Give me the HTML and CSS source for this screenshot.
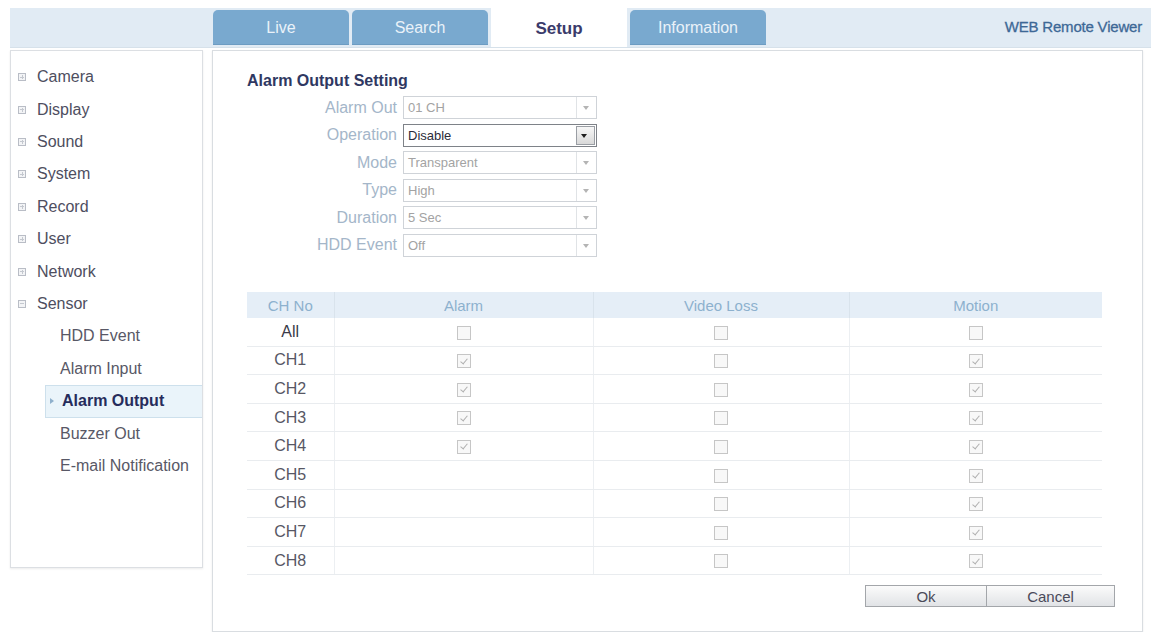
FILE: index.html
```html
<!DOCTYPE html>
<html lang="en">
<head>
    <meta charset="UTF-8">
    <title>WEB Remote Viewer - Setup</title>
    <link rel="stylesheet" href="styles.css">
</head>
<body>
<div class="page">
    <div class="topbar">
        <nav class="tabs">
            <a class="tab">Live</a>
            <a class="tab">Search</a>
            <a class="tab active">Setup</a>
            <a class="tab">Information</a>
        </nav>
        <span class="brand">WEB Remote Viewer</span>
    </div>

    <div class="main">
        <ul class="menu">
            <li class="menu-item"><i class="menu-icon"></i>Camera</li>
            <li class="menu-item"><i class="menu-icon"></i>Display</li>
            <li class="menu-item"><i class="menu-icon"></i>Sound</li>
            <li class="menu-item"><i class="menu-icon"></i>System</li>
            <li class="menu-item"><i class="menu-icon"></i>Record</li>
            <li class="menu-item"><i class="menu-icon"></i>User</li>
            <li class="menu-item"><i class="menu-icon"></i>Network</li>
            <li class="menu-item open"><i class="menu-icon"></i>Sensor</li>
            <li class="sub-item">HDD Event</li>
            <li class="sub-item">Alarm Input</li>
            <li class="sub-item current">Alarm Output</li>
            <li class="sub-item">Buzzer Out</li>
            <li class="sub-item">E-mail Notification</li>
        </ul>

        <section class="panel">
            <h2 class="panel-title">Alarm Output Setting</h2>

            <div class="form">
                <div class="form-row">
                    <label class="form-label">Alarm Out</label>
                    <div class="select"><span class="select-value">01 CH</span><b class="select-arrow"></b></div>
                </div>
                <div class="form-row">
                    <label class="form-label">Operation</label>
                    <div class="select enabled"><span class="select-value">Disable</span><b class="select-arrow"></b></div>
                </div>
                <div class="form-row">
                    <label class="form-label">Mode</label>
                    <div class="select"><span class="select-value">Transparent</span><b class="select-arrow"></b></div>
                </div>
                <div class="form-row">
                    <label class="form-label">Type</label>
                    <div class="select"><span class="select-value">High</span><b class="select-arrow"></b></div>
                </div>
                <div class="form-row">
                    <label class="form-label">Duration</label>
                    <div class="select"><span class="select-value">5 Sec</span><b class="select-arrow"></b></div>
                </div>
                <div class="form-row">
                    <label class="form-label">HDD Event</label>
                    <div class="select"><span class="select-value">Off</span><b class="select-arrow"></b></div>
                </div>
            </div>

            <table class="channels">
                <colgroup>
                    <col class="col-ch">
                    <col class="col-alarm">
                    <col class="col-loss">
                    <col>
                </colgroup>
                <thead>
                    <tr><th>CH No</th><th>Alarm</th><th>Video Loss</th><th>Motion</th></tr>
                </thead>
                <tbody>
                    <tr><td class="ch all">All</td><td><span class="cb"></span></td><td><span class="cb"></span></td><td><span class="cb"></span></td></tr>
                    <tr><td class="ch">CH1</td><td><span class="cb on"></span></td><td><span class="cb"></span></td><td><span class="cb on"></span></td></tr>
                    <tr><td class="ch">CH2</td><td><span class="cb on"></span></td><td><span class="cb"></span></td><td><span class="cb on"></span></td></tr>
                    <tr><td class="ch">CH3</td><td><span class="cb on"></span></td><td><span class="cb"></span></td><td><span class="cb on"></span></td></tr>
                    <tr><td class="ch">CH4</td><td><span class="cb on"></span></td><td><span class="cb"></span></td><td><span class="cb on"></span></td></tr>
                    <tr><td class="ch">CH5</td><td></td><td><span class="cb"></span></td><td><span class="cb on"></span></td></tr>
                    <tr><td class="ch">CH6</td><td></td><td><span class="cb"></span></td><td><span class="cb on"></span></td></tr>
                    <tr><td class="ch">CH7</td><td></td><td><span class="cb"></span></td><td><span class="cb on"></span></td></tr>
                    <tr><td class="ch">CH8</td><td></td><td><span class="cb"></span></td><td><span class="cb on"></span></td></tr>
                </tbody>
            </table>

            <div class="actions">
                <button class="btn btn-ok">Ok</button>
                <button class="btn btn-cancel">Cancel</button>
            </div>
        </section>
    </div>
</div>
</body>
</html>
```

FILE: styles.css
```css
body {
    margin: 0;
    background: #fff;
    font-family: "Liberation Sans", Arial, sans-serif;
    color: #4e4e60;
}
.page {
    padding: 8px 0 0 10px;
}

/* top bar */
.topbar {
    display: flex;
    align-items: flex-start;
    height: 40px;
    background: #e1ebf4;
    border-bottom: 1px solid #d6e1ea;
    box-sizing: border-box;
}
.tabs {
    display: flex;
    gap: 3px;
    margin-left: 203px;
}
.tab {
    width: 136px;
    height: 35px;
    margin-top: 2px;
    line-height: 35px;
    text-align: center;
    font-size: 16px;
    color: #eaf2f9;
    background: #79a9cf;
    border-radius: 5px 5px 0 0;
    box-shadow: inset 0 -1px 0 #6d9cc2;
}
.tab.active {
    height: 39px;
    margin-top: 0;
    line-height: 41px;
    background: #fff;
    color: #3b3b6b;
    font-weight: bold;
    font-size: 17px;
    box-shadow: none;
    border-radius: 0;
}
.brand {
    margin-left: auto;
    padding-right: 9px;
    line-height: 38px;
    font-size: 15px;
    color: #3d6896;
    letter-spacing: -0.2px;
    -webkit-text-stroke: 0.3px #3d6896;
}

/* layout */
.main {
    display: flex;
    align-items: flex-start;
    gap: 9px;
    margin-top: 2px;
}

/* left menu */
.menu {
    list-style: none;
    margin: 0;
    padding: 10px 0 0;
    width: 193px;
    height: 518px;
    box-sizing: border-box;
    border: 1px solid #dcdfe3;
    box-shadow: 0 1px 2px rgba(0, 0, 0, 0.08);
    flex-shrink: 0;
}
.menu-item,
.sub-item {
    display: flex;
    align-items: center;
    height: 32.4px;
    font-size: 16px;
}
.menu-item {
    padding-left: 7px;
}
.menu-icon {
    position: relative;
    width: 6px;
    height: 6px;
    border: 1px solid #b9bdc6;
    background: #f3f4f6;
    margin-right: 11px;
}
.menu-icon::before {
    content: "";
    position: absolute;
    left: 1px;
    right: 1px;
    top: 2.5px;
    height: 1px;
    background: #c4c8cf;
}
.menu-item:not(.open) .menu-icon::after {
    content: "";
    position: absolute;
    top: 1px;
    bottom: 1px;
    left: 2.5px;
    width: 1px;
    background: #c4c8cf;
}
.sub-item {
    padding-left: 49px;
    color: #585866;
}
.sub-item.current {
    height: 33px;
    margin-left: 34px;
    padding-left: 4px;
    box-sizing: border-box;
    background: #eaf4fa;
    border: 1px solid #cde0ec;
    border-right: 0;
    font-weight: bold;
    color: #262c5c;
}
.sub-item.current::before {
    content: "";
    border-left: 4px solid #8fb0cc;
    border-top: 3.5px solid transparent;
    border-bottom: 3.5px solid transparent;
    margin-right: 8px;
}

/* content panel */
.panel {
    flex: 1;
    height: 582px;
    margin-right: 8px;
    box-sizing: border-box;
    border: 1px solid #d9dde1;
    box-shadow: 0 1px 2px rgba(0, 0, 0, 0.08);
}
.panel-title {
    margin: 0;
    padding: 20px 0 0 34px;
    font-size: 16px;
    line-height: 20px;
    color: #2f3862;
}
.form {
    display: flex;
    flex-direction: column;
    gap: 4.5px;
    margin-top: 5px;
}
.form-row {
    display: flex;
    align-items: center;
}
.form-label {
    width: 184px;
    margin-right: 6px;
    text-align: right;
    font-size: 16px;
    color: #a4b6c9;
}
.select {
    display: flex;
    width: 194px;
    height: 23px;
    box-sizing: border-box;
    border: 1px solid #cfd3d8;
    background: #fff;
}
.select-value {
    flex: 1;
    padding-left: 4px;
    line-height: 21px;
    font-size: 13px;
    color: #a3a3a3;
}
.select-arrow {
    position: relative;
    width: 19px;
    border-left: 1px solid #e0e3e6;
}
.select-arrow::after {
    content: "";
    position: absolute;
    left: 6px;
    top: 9px;
    border-top: 4px solid #b4b4b4;
    border-left: 3.5px solid transparent;
    border-right: 3.5px solid transparent;
}
.select.enabled {
    border-color: #7e8288;
}
.select.enabled .select-value {
    color: #2c2c3a;
}
.select.enabled .select-arrow {
    margin: 1px;
    width: 17px;
    border: 1px solid #9a9ea4;
    background: linear-gradient(#f7f7f7, #d9d9d9);
}
.select.enabled .select-arrow::after {
    left: 4px;
    top: 7px;
    border-top-color: #1e1e1e;
}

/* channel table */
.channels {
    margin: 35.5px 0 0 34px;
    width: 855px;
    border-collapse: collapse;
    table-layout: fixed;
}
.col-ch { width: 87px; }
.col-alarm { width: 259px; }
.col-loss { width: 256px; }
.channels th {
    height: 26px;
    padding: 0;
    background: #e5eef7;
    font-weight: normal;
    font-size: 15px;
    color: #8db1ce;
    border-left: 1px solid #d9e3ec;
}
.channels td {
    height: 27.6px;
    padding: 0;
    text-align: center;
    border-bottom: 1px solid #e9ecef;
    border-left: 1px solid #eceff2;
    font-size: 16px;
}
.channels th:first-child,
.channels td:first-child {
    border-left: 0;
}
.ch {
    color: #575764;
}
.ch.all {
    color: #3a3a48;
}
.cb {
    display: inline-block;
    position: relative;
    width: 14px;
    height: 14px;
    box-sizing: border-box;
    border: 1px solid #c6c6c6;
    background: #f8f8f8;
    vertical-align: middle;
}
.cb.on::after {
    content: "";
    position: absolute;
    left: 4px;
    top: 1.5px;
    width: 3px;
    height: 6px;
    border-right: 1.3px solid #b0b0b0;
    border-bottom: 1.3px solid #b0b0b0;
    transform: rotate(40deg);
}

/* buttons */
.actions {
    display: flex;
    justify-content: flex-end;
    width: 868px;
    margin: 10px 0 0 34px;
}
.btn {
    height: 22px;
    padding: 0;
    border: 1px solid #a3a6aa;
    background: linear-gradient(#fbfbfb, #e1e3e6);
    font-family: inherit;
    font-size: 15px;
    color: #4a4a5a;
}
.btn-ok {
    width: 122px;
}
.btn-cancel {
    width: 128px;
    border-left: 0;
}
```
